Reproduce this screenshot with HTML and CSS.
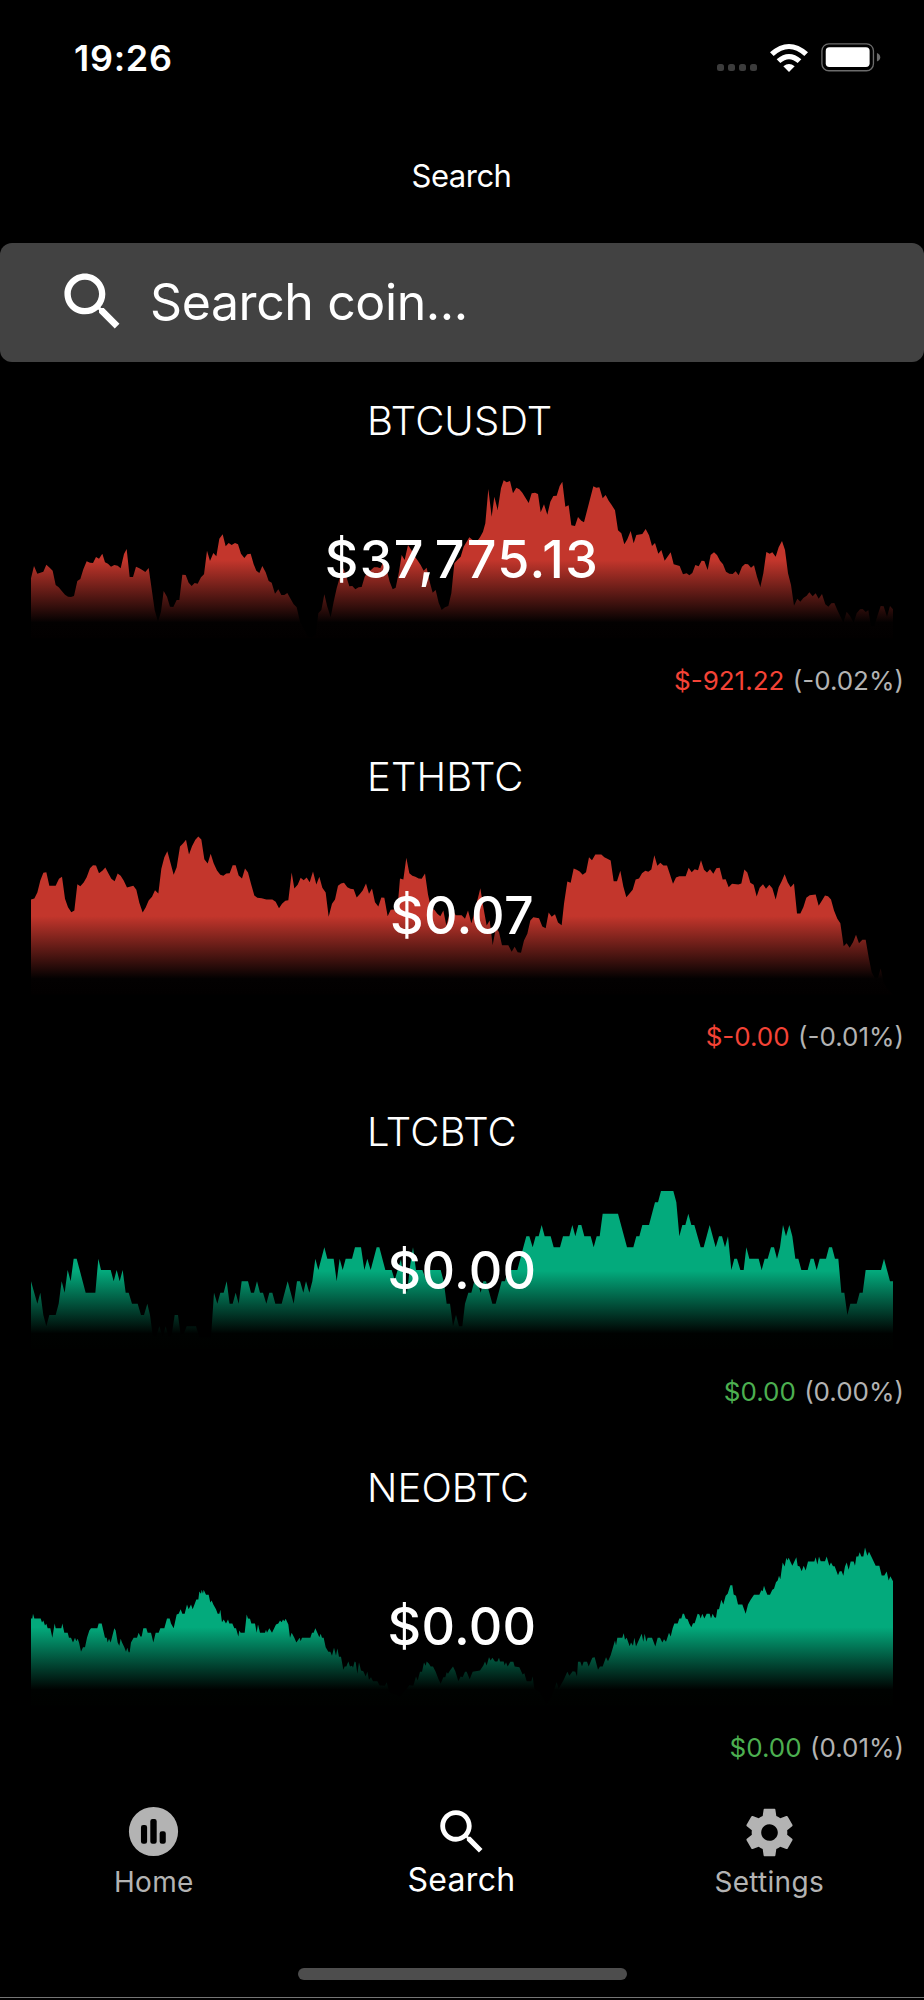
FILE: index.html
```html
<!DOCTYPE html>
<html lang="en">

<head>
    <meta charset="UTF-8">
    <meta name="viewport" content="width=device-width, initial-scale=1.0">
    <title>Search</title>
    <link rel="stylesheet" href="styles.css">
</head>

<body>
    <div class="phone">
        <div class="status-bar">
            <div class="time">19:26</div>
            <div class="status-icons">
                <div class="signal"><span></span><span></span><span></span><span></span></div>
                <svg class="wifi" viewBox="0 0 114 84">
                    <path d="M0 25 Q57 -25 114 25 L103 36 Q57 -6 11 36 Z" />
                    <path d="M20 46 Q57 14 94 46 L83 57 Q57 34 31 57 Z" />
                    <path d="M40 67 Q57 53 74 67 L57 84 Z" />
                </svg>
                <svg class="battery" viewBox="0 0 180 86">
                    <rect class="battery-frame" x="2.5" y="2.5" width="155" height="81" rx="21" />
                    <rect x="14" y="13" width="132" height="59" rx="11" />
                    <path class="battery-tip" d="M168 30 Q178 34 178 43 Q178 52 168 56 Z" />
                </svg>
            </div>
        </div>

        <div class="header">Search</div>

        <div class="search-box">
            <svg class="search-icon" viewBox="0 0 24 24">
                <path d="M15.5 14h-.79l-.28-.27C15.41 12.59 16 11.11 16 9.5 16 5.91 13.09 3 9.5 3S3 5.91 3 9.5 5.91 16 9.5 16c1.61 0 3.09-.59 4.23-1.57l.27.28v.79l5 4.99L20.49 19l-4.99-5zm-6 0C7.01 14 5 11.99 5 9.5S7.01 5 9.5 5 14 7.01 14 9.5 11.99 14 9.5 14z" />
            </svg>
            <span>Search coin...</span>
        </div>

        <!-- gradients shared by the charts -->
        <svg class="defs">
            <defs>
                <linearGradient id="red" x1="0" y1="0" x2="0" y2="1">
                    <stop offset="0.505" stop-color="#c3362c" />
                    <stop offset="0.9" stop-color="#030101" />
                    <stop offset="1" stop-color="#020000" />
                </linearGradient>
                <linearGradient id="green" x1="0" y1="0" x2="0" y2="1">
                    <stop offset="0.505" stop-color="#03aa7c" />
                    <stop offset="0.9" stop-color="#000201" />
                    <stop offset="1" stop-color="#000100" />
                </linearGradient>
            </defs>
        </svg>

        <div class="coin-list">
            <div class="coin">
                <div class="coin-name">BTCUSDT</div>
                <div class="chart">
                    <svg viewBox="0 300 2772 480">
                        <polygon class="red" points="93,775 93,595 102,558 112,581 121,578 130,575 139,554 149,563 158,572 167,615 176,622 186,634 195,644 204,650 213,651 222,648 232,603 241,597 250,568 260,544 270,548 279,549 288,531 297,536 307,521 315,547 324,551 333,560 343,555 353,557 362,565 372,522 380,507 389,591 399,591 408,560 418,565 427,570 436,576 446,564 464,690 474,725 483,695 491,633 501,650 510,680 520,681 530,660 538,660 547,584 557,585 566,608 575,618 584,609 593,611 603,592 612,583 621,512 630,543 640,519 649,529 658,476 668,463 677,499 686,489 695,495 705,489 714,493 723,521 733,534 742,523 752,521 761,553 769,572 778,579 787,558 797,577 806,603 815,608 825,641 835,628 844,645 853,645 862,639 872,657 881,673 890,682 900,725 912,748 925,770 935,772 947,765 955,700 964,690 973,643 982,680 992,712 1001,665 1010,625 1020,590 1030,565 1039,590 1048,619 1057,618 1066,628 1076,622 1085,621 1094,590 1104,575 1113,570 1122,562 1132,562 1141,565 1150,545 1159,565 1169,605 1178,628 1187,623 1197,575 1205,525 1214,540 1224,495 1234,510 1243,528 1252,540 1262,555 1271,572 1280,563 1289,605 1298,638 1307,630 1316,668 1325,690 1335,682 1345,678 1354,640 1363,550 1372,540 1382,530 1391,500 1400,485 1408,472 1418,480 1430,485 1440,472 1449,455 1456,430 1465,327 1475,410 1483,350 1493,390 1503,325 1511,301 1520,307 1530,303 1539,340 1549,323 1558,328 1567,338 1586,369 1595,340 1605,338 1614,342 1622,397 1632,373 1642,404 1651,365 1660,348 1670,347 1679,318 1687,305 1696,380 1706,376 1714,436 1725,438 1734,411 1744,422 1752,427 1780,319 1789,323 1798,322 1808,355 1817,345 1826,362 1835,375 1845,391 1854,451 1864,460 1873,493 1882,478 1892,453 1901,490 1909,465 1927,462 1937,447 1947,466 1956,498 1965,489 1975,521 1984,510 1994,542 2012,517 2021,553 2039,558 2049,583 2060,580 2068,586 2077,579 2086,555 2096,559 2105,542 2113,543 2123,570 2132,525 2142,517 2151,525 2160,542 2169,553 2178,575 2188,581 2198,582 2207,574 2216,586 2226,560 2235,552 2244,553 2253,563 2262,556 2271,590 2281,621 2290,580 2299,516 2309,521 2317,517 2327,530 2336,502 2346,483 2355,510 2364,580 2373,615 2382,677 2392,656 2401,665 2410,654 2420,647 2428,637 2438,649 2447,640 2456,656 2466,642 2476,673 2485,680 2494,670 2503,669 2512,690 2530,728 2540,695 2550,708 2561,728 2570,700 2580,688 2588,687 2597,696 2605,691 2613,738 2623,738 2633,705 2642,678 2651,679 2661,710 2670,678 2679,688 2679,775" />
                    </svg>
                    <div class="price wide">$37,775.13</div>
                </div>
                <div class="change"><span class="down">$-921.22</span> (-0.02%)</div>
            </div>

            <div class="coin">
                <div class="coin-name">ETHBTC</div>
                <div class="chart">
                    <svg viewBox="0 286.5 2772 480">
                        <polygon class="red" points="93,762 93,477 103,474 112,456 121,420 130,397 139,395 148,436 167,436 177,415 186,409 195,475 204,500 214,515 223,510 232,431 241,437 251,426 260,410 270,383 279,374 288,375 297,398 307,391 316,381 325,398 334,415 344,422 353,399 362,406 371,420 381,441 400,436 409,448 418,487 428,516 437,501 446,480 456,469 465,449 475,459 484,385 493,350 502,332 511,365 521,403 530,380 540,318 549,309 558,298 567,342 576,317 586,298 595,288 604,297 613,356 623,369 632,340 641,368 651,390 661,403 670,406 679,399 689,398 698,374 707,374 716,405 726,414 735,384 744,396 753,430 763,465 772,472 785,473 799,477 817,477 827,484 837,503 846,490 856,481 865,479 875,396 883,444 893,433 902,412 911,419 920,411 929,425 939,393 949,432 958,409 967,442 977,456 986,529 996,490 1005,477 1014,436 1023,429 1032,427 1042,440 1051,445 1061,446 1070,471 1079,461 1088,450 1098,429 1107,460 1116,444 1125,485 1135,498 1144,471 1153,472 1163,527 1172,508 1182,507 1191,520 1200,414 1210,417 1219,352 1228,398 1237,406 1246,409 1256,414 1265,415 1275,399 1284,462 1293,502 1303,508 1312,520 1321,527 1330,510 1339,555 1349,520 1358,507 1367,524 1385,524 1395,535 1404,510 1414,548 1423,520 1432,480 1441,443 1450,500 1460,555 1469,540 1478,614 1488,560 1497,575 1506,614 1525,614 1535,634 1544,619 1553,635 1563,637 1572,600 1582,580 1591,540 1600,530 1617,533 1627,558 1637,563 1646,516 1655,529 1665,521 1674,546 1685,554 1692,490 1702,423 1712,427 1721,384 1730,388 1739,393 1748,403 1758,395 1767,350 1776,359 1786,342 1804,342 1813,350 1822,355 1832,360 1841,422 1851,422 1861,391 1870,438 1879,470 1888,460 1898,448 1907,417 1917,414 1926,398 1936,391 1945,394 1954,387 1963,344 1972,376 1981,367 1990,375 2001,375 2010,402 2019,430 2028,411 2038,407 2057,407 2066,382 2075,395 2084,386 2094,389 2103,359 2112,388 2121,396 2130,386 2140,400 2149,383 2159,382 2168,417 2177,416 2186,440 2196,430 2215,432 2224,429 2233,387 2242,396 2251,427 2261,433 2270,468 2279,442 2289,431 2298,445 2308,433 2317,443 2327,477 2336,440 2345,422 2354,401 2363,425 2372,440 2382,429 2391,519 2401,519 2410,500 2419,472 2429,464 2447,462 2456,496 2466,480 2475,465 2484,467 2493,477 2502,510 2512,535 2521,548 2531,617 2540,608 2549,622 2559,605 2568,583 2577,608 2587,598 2597,598 2606,650 2615,695 2624,712 2634,712 2642,684 2651,725 2660,742 2679,762" />
                    </svg>
                    <div class="price">$0.07</div>
                </div>
                <div class="change"><span class="down">$-0.00</span> (-0.01%)</div>
            </div>

            <div class="coin">
                <div class="coin-name">LTCBTC</div>
                <div class="chart">
                    <svg viewBox="0 273 2772 480">
                        <polygon class="green" points="93,748 93,544 112,611 121,578 130,645 139,679 148,645 167,645 176,611 185,544 194,578 203,510 212,544 221,476 230,476 257,578 286,578 295,476 303,510 332,510 341,544 350,510 359,544 368,510 377,578 386,578 396,611 413,611 423,645 432,645 442,611 450,645 458,705 468,710 478,679 488,712 497,679 506,712 515,705 524,645 534,645 542,705 552,700 560,679 588,679 598,712 633,712 642,578 652,611 661,578 671,578 680,544 689,611 698,611 707,578 716,611 725,544 744,544 753,578 762,578 771,544 780,578 789,578 799,611 808,578 817,578 826,611 845,611 863,544 881,611 891,544 900,544 910,578 918,544 928,578 937,544 946,476 955,510 973,442 982,476 1001,476 1010,544 1019,476 1028,510 1037,476 1056,476 1065,442 1083,442 1093,510 1102,476 1112,510 1130,442 1138,442 1156,510 1175,510 1184,540 1193,510 1203,478 1212,544 1221,578 1230,500 1239,442 1248,510 1267,510 1280,544 1290,510 1322,510 1331,544 1340,611 1350,611 1359,679 1368,645 1377,679 1387,679 1395,611 1405,578 1414,578 1423,544 1432,544 1442,578 1450,544 1458,544 1468,578 1477,611 1487,611 1505,544 1515,544 1524,510 1552,510 1561,476 1570,442 1579,409 1588,409 1598,442 1607,409 1616,409 1625,375 1634,409 1652,409 1661,442 1680,442 1689,409 1708,409 1717,375 1726,409 1735,375 1744,375 1753,409 1772,409 1781,442 1790,409 1799,409 1808,341 1854,341 1881,442 1900,442 1909,409 1918,409 1927,375 1947,375 1965,307 1974,307 1983,273 2020,273 2029,307 2038,409 2047,375 2056,375 2065,341 2074,375 2083,375 2102,442 2111,442 2129,375 2147,442 2157,409 2166,409 2175,442 2184,409 2194,510 2203,476 2211,476 2221,510 2231,510 2239,442 2248,476 2276,476 2285,510 2294,476 2303,476 2313,442 2322,442 2331,476 2340,442 2349,375 2358,409 2368,375 2377,409 2386,476 2395,476 2404,510 2423,510 2432,476 2441,476 2450,510 2459,476 2478,476 2487,442 2496,442 2505,476 2515,476 2524,578 2533,578 2542,645 2551,611 2570,611 2579,578 2588,578 2597,510 2643,510 2652,476 2670,544 2679,544 2679,748" />
                    </svg>
                    <div class="price">$0.00</div>
                </div>
                <div class="change"><span class="up">$0.00</span> (0.00%)</div>
            </div>

            <div class="coin">
                <div class="coin-name">NEOBTC</div>
                <div class="chart">
                    <svg viewBox="0 289.5 2772 480">
                        <polygon class="green" points="93,765 93,504 97,504 99,490 103,504 122,504 126,516 130,510 135,525 139,520 143,533 151,533 157,562 164,519 167,533 184,533 187,519 193,547 203,547 207,562 213,562 219,576 225,562 229,572 233,565 237,576 243,604 249,590 255,590 261,562 268,540 273,533 292,533 296,519 305,519 315,562 320,562 323,576 327,565 332,576 343,533 347,540 353,576 358,586 362,565 366,576 373,590 378,604 382,592 386,605 389,605 393,576 401,562 411,562 416,547 421,558 425,558 430,533 439,533 443,547 453,547 460,576 467,547 476,547 481,533 493,533 501,504 509,504 513,519 521,533 530,492 536,490 542,476 547,490 554,490 561,462 566,476 573,462 578,476 589,447 595,447 598,423 603,430 605,418 609,430 611,418 618,433 626,433 631,456 635,450 640,462 648,476 653,490 658,490 661,478 666,515 671,507 678,519 684,507 688,519 697,519 703,533 708,533 715,558 718,540 722,547 734,547 740,492 744,504 750,505 754,519 765,519 770,547 774,522 780,547 795,547 798,538 801,547 808,533 816,547 828,522 835,519 840,510 845,515 849,507 853,512 857,505 865,522 870,562 875,547 883,562 889,576 899,562 902,572 906,562 931,562 936,547 941,547 946,533 952,547 958,560 962,550 966,562 971,562 977,590 985,604 991,604 996,616 1002,592 1008,616 1012,594 1017,619 1023,619 1030,658 1034,648 1039,648 1045,633 1050,648 1056,646 1059,652 1064,633 1067,635 1072,670 1077,636 1083,660 1090,662 1097,678 1102,664 1107,688 1113,680 1119,692 1132,692 1139,705 1155,706 1160,695 1168,725 1200,738 1220,715 1228,704 1240,706 1248,678 1253,690 1260,664 1266,664 1272,636 1277,646 1280,633 1287,640 1292,648 1299,648 1307,664 1315,685 1322,700 1330,680 1336,680 1340,665 1344,670 1350,660 1359,648 1366,662 1375,692 1382,678 1388,680 1395,664 1400,664 1409,686 1418,664 1440,660 1450,645 1455,633 1460,645 1467,620 1472,630 1477,622 1485,633 1492,633 1497,622 1500,633 1511,633 1514,645 1518,635 1523,648 1531,634 1540,634 1544,648 1558,650 1568,672 1573,668 1580,692 1594,692 1598,678 1603,715 1620,725 1640,762 1655,738 1670,695 1676,715 1690,690 1702,664 1708,676 1718,662 1726,664 1731,678 1734,634 1741,634 1746,648 1751,634 1761,634 1766,648 1777,622 1784,620 1794,658 1800,648 1808,648 1818,620 1824,632 1832,614 1845,570 1848,585 1852,562 1867,562 1871,548 1875,568 1880,562 1889,587 1893,576 1899,586 1903,562 1908,588 1925,550 1930,574 1934,550 1939,574 1943,562 1956,562 1966,588 1973,562 1980,562 1987,576 1992,566 1998,574 2007,547 2012,558 2018,533 2023,519 2033,519 2038,504 2044,504 2048,490 2052,490 2057,504 2063,506 2068,520 2074,530 2079,518 2084,518 2093,490 2098,492 2102,504 2107,490 2113,504 2120,490 2129,490 2133,504 2138,490 2143,500 2148,502 2152,476 2157,476 2164,448 2170,462 2177,436 2183,430 2191,404 2197,404 2201,432 2208,436 2214,462 2227,462 2237,490 2244,462 2252,448 2262,433 2278,433 2284,419 2288,422 2292,406 2296,418 2302,433 2310,433 2317,418 2322,415 2328,395 2333,390 2337,376 2341,386 2348,336 2354,348 2359,322 2362,330 2366,322 2371,333 2377,346 2382,335 2389,320 2393,346 2399,348 2405,362 2411,346 2417,360 2424,333 2443,333 2447,320 2452,342 2457,318 2462,332 2475,332 2480,318 2488,346 2493,336 2499,347 2504,347 2514,374 2519,362 2525,362 2530,376 2535,348 2540,336 2546,358 2552,333 2561,333 2565,346 2569,318 2575,318 2579,305 2584,318 2590,318 2595,291 2602,316 2607,304 2615,320 2627,346 2638,346 2645,375 2653,375 2660,363 2666,390 2671,377 2679,392 2679,765" />
                    </svg>
                    <div class="price">$0.00</div>
                </div>
                <div class="change"><span class="up">$0.00</span> (0.01%)</div>
            </div>
        </div>

        <div class="nav">
            <div class="nav-item">
                <svg class="home-icon" viewBox="0 0 24 24">
                    <path fill-rule="evenodd" d="M12 2a10 10 0 1 0 0 20a10 10 0 0 0 0-20zM7.8 9.4h.7a.9.9 0 0 1 .9.9v5.8a.9.9 0 0 1-.9.9h-.7a.9.9 0 0 1-.9-.9v-5.8a.9.9 0 0 1 .9-.9zM11.6 6.9h.8a.9.9 0 0 1 .9.9v8.3a.9.9 0 0 1-.9.9h-.8a.9.9 0 0 1-.9-.9V7.8a.9.9 0 0 1 .9-.9zM15.4 11.9h.7a.9.9 0 0 1 .9.9v3.3a.9.9 0 0 1-.9.9h-.7a.9.9 0 0 1-.9-.9v-3.3a.9.9 0 0 1 .9-.9z" />
                </svg>
                <span>Home</span>
            </div>
            <div class="nav-item active">
                <svg class="find-icon" viewBox="0 0 24 24">
                    <path d="M15.5 14h-.79l-.28-.27C15.41 12.59 16 11.11 16 9.5 16 5.91 13.09 3 9.5 3S3 5.91 3 9.5 5.91 16 9.5 16c1.61 0 3.09-.59 4.23-1.57l.27.28v.79l5 4.99L20.49 19l-4.99-5zm-6 0C7.01 14 5 11.99 5 9.5S7.01 5 9.5 5 14 7.01 14 9.5 11.99 14 9.5 14z" />
                </svg>
                <span>Search</span>
            </div>
            <div class="nav-item">
                <svg class="settings-icon" viewBox="0 0 24 24">
                    <path d="M19.43 12.98c.04-.32.07-.64.07-.98s-.03-.66-.07-.98l2.11-1.65c.19-.15.24-.42.12-.64l-2-3.46c-.12-.22-.39-.3-.61-.22l-2.49 1c-.52-.4-1.08-.73-1.69-.98l-.38-2.65C14.46 2.18 14.25 2 14 2h-4c-.25 0-.46.18-.49.42l-.38 2.65c-.61.25-1.17.59-1.69.98l-2.49-1c-.23-.09-.49 0-.61.22l-2 3.46c-.13.22-.07.49.12.64l2.11 1.65c-.04.32-.07.65-.07.98s.03.66.07.98l-2.11 1.65c-.19.15-.24.42-.12.64l2 3.46c.12.22.39.3.61.22l2.49-1c.52.4 1.08.73 1.69.98l.38 2.65c.03.24.24.42.49.42h4c.25 0 .46-.18.49-.42l.38-2.65c.61-.25 1.17-.59 1.69-.98l2.49 1c.23.09.49 0 .61-.22l2-3.46c.12-.22.07-.49-.12-.64l-2.11-1.65zM12 15.5c-1.93 0-3.5-1.57-3.5-3.5s1.57-3.5 3.5-3.5 3.5 1.57 3.5 3.5-1.57 3.5-3.5 3.5z" />
                </svg>
                <span>Settings</span>
            </div>
        </div>

        <div class="home-indicator"></div>
    </div>
</body>

</html>
```
FILE: styles.css
```css
html {
    background-color: #000000;
}

body {
    margin: 0;
    background-color: #000000;
    color: #ffffff;
    font-family: Inter, "Liberation Sans", sans-serif;
}

.phone {
    box-sizing: border-box;
    width: 924px;
    height: 1998px;
    border-bottom: 1px solid #757575;
}

/* status bar */
.status-bar {
    display: flex;
    justify-content: space-between;
    height: 116px;
    padding: 0 43px 0 74px;
}

.time {
    line-height: 116px;
    font-size: 36px;
    font-weight: 600;
    letter-spacing: 0.7px;
}

.status-icons {
    display: flex;
    align-items: center;
}

.signal {
    display: flex;
    gap: 4px;
    margin: 19px 13px 0 0;
}

.signal span {
    width: 7px;
    height: 7px;
    border-radius: 2.5px;
    background-color: #3c3c3c;
}

.wifi {
    width: 38px;
    height: 28px;
    margin: 0 13px 1px 0;
    fill: #ffffff;
}

.battery {
    width: 60px;
    height: 28.6px;
    margin-bottom: 1px;
    fill: #ffffff;
}

.battery .battery-frame {
    fill: none;
    stroke: #6b6b6b;
    stroke-width: 4;
}

.battery .battery-tip {
    fill: #6b6b6b;
}

.header {
    height: 127px;
    line-height: 120px;
    text-align: center;
    text-indent: -1px;
    font-size: 31px;
    letter-spacing: -0.5px;
}

/* search box */
.search-box {
    display: flex;
    align-items: center;
    height: 118.5px;
    padding-left: 54.5px;
    border-radius: 12px;
    background-color: #424242;
    font-size: 50px;
    letter-spacing: -0.4px;
}

.search-icon {
    width: 75.5px;
    height: 75.5px;
    margin: 0 20px 2px 0;
    fill: #ffffff;
}

.defs {
    position: absolute;
    width: 0;
    height: 0;
}

/* coins */
.coin-list {
    padding-top: 18.5px;
}

.coin {
    height: 355.5px;
}

.coin-name {
    height: 100px;
    padding-left: 367px;
    line-height: 81px;
    font-size: 40px;
    font-weight: 300;
    letter-spacing: 0.1px;
}

.chart {
    position: relative;
    height: 160px;
}

.chart svg {
    display: block;
    width: 924px;
    height: 160px;
}

.red {
    fill: url(#red);
}

.green {
    fill: url(#green);
}

/* price lies over the chart */
.price {
    position: absolute;
    top: 0;
    left: 0;
    width: 100%;
    line-height: 160px;
    text-align: center;
    font-size: 52px;
    font-weight: 500;
    letter-spacing: 0.3px;
}

.price.wide {
    letter-spacing: 1.4px;
}

.change {
    padding-right: 20px;
    line-height: 82px;
    text-align: right;
    font-size: 26px;
    word-spacing: 1px;
    color: #b3b3b3;
}

.down {
    color: #f44336;
}

.up {
    color: #4caf50;
}

/* bottom navigation */
.nav {
    display: flex;
    height: 166px;
    padding-right: 1px;
}

.nav-item {
    display: flex;
    flex: 1;
    flex-direction: column;
    align-items: center;
    color: #b3b3b3;
    fill: #b3b3b3;
    font-size: 28px;
    line-height: 41px;
    letter-spacing: 0.3px;
}

.nav-item.active {
    color: #ffffff;
    fill: #ffffff;
    font-size: 32px;
    line-height: 36px;
}

.nav-item svg {
    flex: none;
}

.home-icon {
    width: 59px;
    height: 59px;
    margin-bottom: 1px;
}

.find-icon {
    width: 58px;
    height: 58px;
    margin: 1px 0;
}

.settings-icon {
    width: 57px;
    height: 57px;
    margin: 2px 0 1px;
}

.home-indicator {
    width: 329px;
    height: 12px;
    margin: 0 auto;
    border-radius: 6px;
    background-color: #4d4d4d;
}
```
